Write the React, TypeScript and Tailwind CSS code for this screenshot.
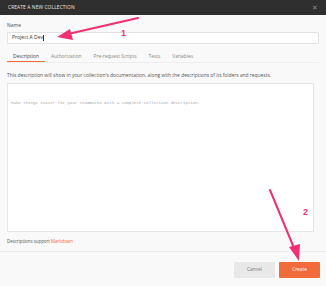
const tabs = ["Description", "Authorization", "Pre-request Scripts", "Tests", "Variables"];

const App = () => {
	return (
		<div className="relative w-[326px] h-[286px] overflow-hidden bg-[#f9f9f9] font-['Open_Sans',sans-serif]">
			<div className="flex items-center justify-between h-[15px] px-[8px] bg-[#2f2f2f]">
				<span className="text-[4.9px] text-[#e6e6e6] tracking-[0.1px]">CREATE A NEW COLLECTION</span>
				<span className="text-[7px] leading-none text-[#8a8a8a]">✕</span>
			</div>

			<div className="flex flex-col px-[7px] pt-[7px]">
				<label className="text-[5px] leading-[6px] text-[#505050]">Name</label>
				<div className="flex items-center mt-[4px] h-[12px] w-[312px] px-[4px] bg-white border border-[#e2e2e2] rounded-[1px]">
					<span className="text-[5px] text-[#333]">Project A Dev</span>
					<span className="w-[0.5px] h-[6px] bg-[#333]" />
				</div>

				<div className="flex mt-[8px] h-[11px] border-b border-[#eeeeee]">
					{tabs.map((tab, i) => (
						<div
							key={tab}
							className={
								i === 0
									? "flex items-center px-[6px] text-[4.85px] text-[#444] border-b-[1.5px] border-[#f26b3a]"
									: "flex items-center px-[6px] text-[4.85px] text-[#888]"
							}
						>
							{tab}
						</div>
					))}
				</div>

				<p className="mt-[9px] text-[4.9px] leading-[6px] text-[#555]">
					This description will show in your collection&apos;s documentation, along with the descriptions of its folders and requests.
				</p>

				<div className="mt-[5px] h-[149px] w-[307px] bg-white border border-[#e6e6e6] px-[3px] py-[2px]">
					<span className="text-[4.1px] font-['Liberation_Mono',monospace] text-[#a8a8a8]">
						Make things easier for your teammates with a complete collection description.
					</span>
				</div>

				<p className="mt-[6px] text-[4.4px] leading-[6px] text-[#555]">
					Descriptions support <span className="text-[#f26b3a]">Markdown</span>
				</p>
			</div>

			<div className="mt-[7px] border-t border-[#ececec] flex justify-end gap-[4px] pt-[10px] pr-[6px]">
				<button className="w-[41px] h-[16px] rounded-[1px] bg-[#e8e8e8] text-[4.8px] text-[#777]">Cancel</button>
				<button className="w-[41px] h-[16px] rounded-[1px] bg-[#f26b3a] text-[4.8px] text-white">Create</button>
			</div>

			<svg className="absolute inset-0 pointer-events-none" width="326" height="286" viewBox="0 0 326 286">
				<line x1="138" y1="18" x2="68" y2="34" stroke="#f0306f" strokeWidth="2" strokeLinecap="round" />
				<polygon points="57,37 70,29 73,40" fill="#f0306f" />
				<line x1="270" y1="190" x2="294" y2="248" stroke="#f0306f" strokeWidth="2" strokeLinecap="round" />
				<polygon points="299,261 289,247 300,244" fill="#f0306f" />
				<text x="121" y="36" fontSize="9" fontWeight="bold" fill="#f0306f" fontFamily="Liberation Sans, sans-serif">1</text>
				<text x="303" y="215" fontSize="9" fontWeight="bold" fill="#f0306f" fontFamily="Liberation Sans, sans-serif">2</text>
			</svg>
		</div>
	);
};

export default App;
